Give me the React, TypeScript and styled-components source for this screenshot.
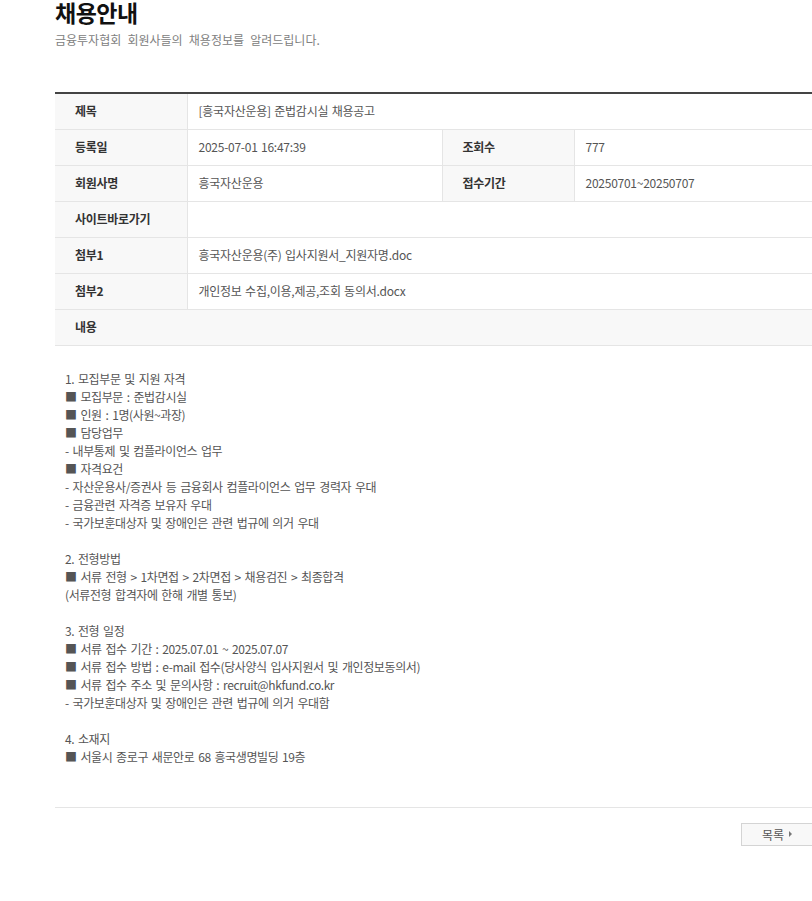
import React from 'react';
import styled, { createGlobalStyle } from 'styled-components';

const GlobalStyle = createGlobalStyle`
  html, body {
    margin: 0;
    padding: 0;
    overflow-x: hidden;
    background: #fff;
  }
  body {
    font-family: "Noto Sans CJK KR", "Noto Sans", sans-serif;
    color: #555;
  }
`;

const rows = [
  { label: '제목', value: '[흥국자산운용] 준법감시실 채용공고' },
  { label: '등록일', value: '2025-07-01 16:47:39', label2: '조회수', value2: '777' },
  { label: '회원사명', value: '흥국자산운용', label2: '접수기간', value2: '20250701~20250707' },
  { label: '사이트바로가기', value: '' },
  { label: '첨부1', value: '흥국자산운용(주) 입사지원서_지원자명.doc' },
  { label: '첨부2', value: '개인정보 수집,이용,제공,조회 동의서.docx' },
];

const content = [
  '1. 모집부문 및 지원 자격',
  '■ 모집부문 : 준법감시실',
  '■ 인원 : 1명(사원~과장)',
  '■ 담당업무',
  '- 내부통제 및 컴플라이언스 업무',
  '■ 자격요건',
  '- 자산운용사/증권사 등 금융회사 컴플라이언스 업무 경력자 우대',
  '- 금융관련 자격증 보유자 우대',
  '- 국가보훈대상자 및 장애인은 관련 법규에 의거 우대',
  '',
  '2. 전형방법',
  '■ 서류 전형 > 1차면접 > 2차면접 > 채용검진 > 최종합격',
  '(서류전형 합격자에 한해 개별 통보)',
  '',
  '3. 전형 일정',
  '■ 서류 접수 기간 : 2025.07.01 ~ 2025.07.07',
  '■ 서류 접수 방법 : e-mail 접수(당사양식 입사지원서 및 개인정보동의서)',
  '■ 서류 접수 주소 및 문의사항 : recruit@hkfund.co.kr',
  '- 국가보훈대상자 및 장애인은 관련 법규에 의거 우대함',
  '',
  '4. 소재지',
  '■ 서울시 종로구 새문안로 68 흥국생명빌딩 19층',
];

const App = () => {
  return (
    <Page>
      <GlobalStyle />
      <Inner>
        <Title>채용안내</Title>
        <SubTitle>금융투자협회 회원사들의 채용정보를 알려드립니다.</SubTitle>

        <Table>
          <colgroup>
            <col style={{ width: 132 }} />
            <col style={{ width: 255 }} />
            <col style={{ width: 132 }} />
            <col />
          </colgroup>
          <tbody>
            {rows.map((r) => (
              <tr key={r.label}>
                <Th>{r.label}</Th>
                {r.label2 ? (
                  <>
                    <Td>{r.value}</Td>
                    <Th>{r.label2}</Th>
                    <Td>{r.value2}</Td>
                  </>
                ) : (
                  <Td colSpan={3}>{r.value}</Td>
                )}
              </tr>
            ))}
            <tr>
              <Th colSpan={4} $wide>
                내용
              </Th>
            </tr>
          </tbody>
        </Table>

        <Content>
          {content.map((line, i) => (
            <Line key={i}>{line || '\u00a0'}</Line>
          ))}
        </Content>

        <ButtonBar>
          <ListButton>
            목록
            <Arrow />
          </ListButton>
        </ButtonBar>
      </Inner>
    </Page>
  );
};

export default App;

const Page = styled.div`
  width: 100vw;
  overflow: hidden;
`;

const Inner = styled.div`
  width: 1000px;
  padding-left: 55px;
`;

const Title = styled.h1`
  margin: 0;
  font-size: 23px;
  line-height: 25px;
  font-weight: 700;
  color: #111;
  letter-spacing: -0.5px;
`;

const SubTitle = styled.p`
  margin: 6px 0 0;
  font-size: 12px;
  line-height: 18px;
  color: #808080;
  word-spacing: 3.5px;
`;

const Table = styled.table`
  width: 1000px;
  margin-top: 43px;
  border-collapse: collapse;
  border-top: 2px solid #444;
  table-layout: fixed;
`;

const Th = styled.th<{ $wide?: boolean }>`
  height: 33px;
  padding: 0 0 2px 20px;
  text-align: left;
  background: #f8f8f8;
  font-size: 12px;
  font-weight: 700;
  color: #333;
  letter-spacing: -0.3px;
  border-bottom: 1px solid #e5e5e5;
  border-right: ${(p) => (p.$wide ? 'none' : '1px solid #e5e5e5')};
  border-left: 1px solid #e5e5e5;
  &:first-child {
    border-left: none;
  }
`;

const Td = styled.td`
  height: 33px;
  padding: 0 0 2px 11px;
  font-size: 12px;
  color: #555;
  letter-spacing: -0.25px;
  word-spacing: 1px;
  border-bottom: 1px solid #e5e5e5;
`;

const Content = styled.div`
  width: 757px;
  padding: 24px 10px 41px;
  box-sizing: border-box;
  border-bottom: 1px solid #e5e5e5;
`;

const Line = styled.div`
  font-size: 12px;
  line-height: 18px;
  color: #555;
  letter-spacing: -0.4px;
  word-spacing: 1.5px;
  white-space: nowrap;
`;

const ButtonBar = styled.div`
  width: 757px;
  display: flex;
  justify-content: flex-end;
  padding-top: 15px;
`;

const ListButton = styled.button`
  display: flex;
  align-items: center;
  justify-content: center;
  gap: 5px;
  width: 72px;
  height: 23px;
  margin-right: -1px;
  padding: 0 0 1px;
  background: #f8f8f8;
  border: 1px solid #d4d4d4;
  font-family: "Noto Sans CJK KR", sans-serif;
  font-size: 12px;
  color: #555;
  cursor: pointer;
`;

const Arrow = styled.span`
  width: 0;
  height: 0;
  border-top: 3px solid transparent;
  border-bottom: 3px solid transparent;
  border-left: 3px solid #777;
`;
